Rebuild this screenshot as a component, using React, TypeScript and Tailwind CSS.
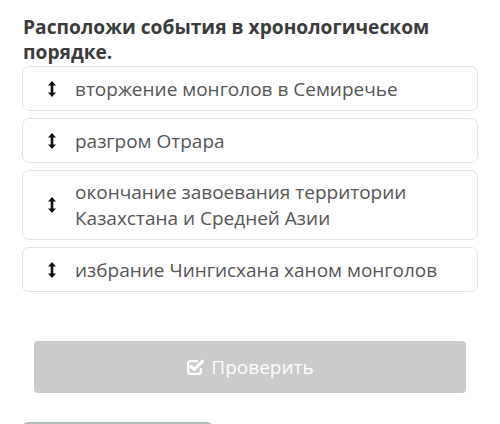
const events = [
  "вторжение монголов в Семиречье",
  "разгром Отрара",
  "окончание завоевания территории Казахстана и Средней Азии",
  "избрание Чингисхана ханом монголов",
];

// drag handle: narrow up/down arrow
function DragArrow() {
  return (
    <svg width="8" height="16" viewBox="0 0 8 16" fill="#111">
      <path d="M4 0L8 4.6H5.3v6.8H8L4 16 0 11.4h2.7V4.6H0z" />
    </svg>
  );
}

// outline square with a bold tick poking out of the top-right corner
function CheckSquareIcon() {
  return (
    <svg width="18" height="17" viewBox="0 0 18 17" fill="none">
      <path
        d="M12 2.2H4.2a2 2 0 0 0-2 2v8.6a2 2 0 0 0 2 2h8.6a2 2 0 0 0 2-2V9"
        stroke="white"
        strokeWidth="2.3"
      />
      <path
        d="M5.2 7.4l3.1 3.1L16.4 2.4"
        stroke="white"
        strokeWidth="3"
        strokeLinecap="square"
      />
    </svg>
  );
}

export default function App() {
  return (
    <div className="w-[500px] h-[424px] overflow-hidden bg-white font-['Open_Sans',sans-serif]">
      <div className="px-[22px] pt-[14px]">
        <h1 className="text-[19.2px] leading-[25px] font-bold text-[#3b3b3b] pl-px">
          Расположи события в хронологическом порядке.
        </h1>

        {/* sortable list */}
        <div className="mt-[2px] flex flex-col gap-[7px]">
          {events.map((e) => (
            <div
              key={e}
              className="flex items-center min-h-[45px] py-[8px] rounded-[7px] border border-[#e2e2e2] bg-white"
            >
              <div className="w-[52px] flex justify-center shrink-0 pl-[6px]">
                <DragArrow />
              </div>
              <span className="text-[19px] leading-[26px] text-[#555] pr-4">{e}</span>
            </div>
          ))}
        </div>

        <div className="px-[12px] mt-[49px]">
          <button className="w-full h-[52px] rounded-[4px] bg-[#cbcbcb] text-white text-[19px] flex items-center justify-center gap-[7px]">
            <CheckSquareIcon />
            Проверить
          </button>
        </div>

        <div className="mt-[29px] w-[191px] h-[30px] rounded-t-[6px] border-t-2 border-x-2 border-[#aebcbc]" />
      </div>
    </div>
  );
}
